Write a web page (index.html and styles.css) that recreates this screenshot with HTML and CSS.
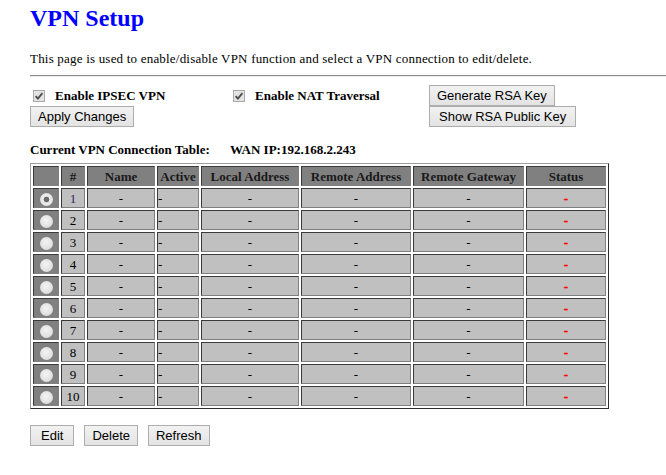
FILE: index.html
```html
<!DOCTYPE html>
<html lang="en">
<head>
  <meta charset="UTF-8" />
  <title>VPN Setup</title>
  <link rel="stylesheet" href="styles.css">
</head>
<body>

<h2 class="page-title">VPN Setup</h2>
<p class="intro">This page is used to enable/disable VPN function and select a VPN connection to edit/delete.</p>
<hr class="divider">

<div class="options">
  <label class="check">
    <svg class="check-box" width="12" height="12" viewBox="0 0 12 12">
      <rect x="0.5" y="0.5" width="11" height="11" fill="#e3e3e3" stroke="#a8a8a8"/>
      <path d="M2.6 6.2 L4.9 8.6 L9.4 3.2" fill="none" stroke="#4a4a4a" stroke-width="1.8"/>
    </svg>
    Enable IPSEC VPN
  </label>
  <label class="check">
    <svg class="check-box" width="12" height="12" viewBox="0 0 12 12">
      <rect x="0.5" y="0.5" width="11" height="11" fill="#e3e3e3" stroke="#a8a8a8"/>
      <path d="M2.6 6.2 L4.9 8.6 L9.4 3.2" fill="none" stroke="#4a4a4a" stroke-width="1.8"/>
    </svg>
    Enable NAT Traversal
  </label>
  <div><button class="btn">Generate RSA Key</button></div>
  <div><button class="btn">Apply Changes</button></div>
  <div></div>
  <div><button class="btn btn-wide">Show RSA Public Key</button></div>
</div>

<div class="table-caption">
  <span>Current VPN Connection Table:</span>
  <span>WAN IP:192.168.2.243</span>
</div>

<table class="vpn-table">
  <thead>
    <tr>
      <th class="col-sel"></th>
      <th class="col-num">#</th>
      <th class="col-name">Name</th>
      <th class="col-active">Active</th>
      <th class="col-local">Local Address</th>
      <th class="col-remote">Remote Address</th>
      <th class="col-gateway">Remote Gateway</th>
      <th class="col-status">Status</th>
    </tr>
  </thead>
  <tbody id="vpn-body"></tbody>
</table>

<div class="actions">
  <button class="btn btn-edit">Edit</button>
  <button class="btn">Delete</button>
  <button class="btn">Refresh</button>
</div>

<script>
const tbody = document.getElementById('vpn-body');
for (let i = 1; i <= 10; i++) {
  const row = document.createElement('tr');
  row.innerHTML = `
    <td class="sel"><input type="radio" name="select" ${i === 1 ? 'checked' : ''}></td>
    <td class="num${i === 1 ? ' current' : ''}">${i}</td>
    <td>-</td>
    <td class="left">-</td>
    <td>-</td>
    <td>-</td>
    <td>-</td>
    <td class="status">-</td>
  `;
  tbody.appendChild(row);
}
</script>

</body>
</html>
```

FILE: styles.css
```css
body { margin: 0; padding-left: 30px; font-family: "Liberation Serif", "Times New Roman", serif; font-size: 13px; color: #000; background: #fff; }
.page-title { margin: 5px 0 0; font-size: 24px; font-weight: bold; color: #0000ff; line-height: 27px; }
.intro { margin: 19px 0 0; line-height: 15px; letter-spacing: 0.2px; }
.divider { margin: 9px 0 0; border: none; border-top: 1px solid #8c8c8c; border-bottom: 1px solid #ececec; height: 0; }

.options { display: grid; grid-template-columns: 200px 199px auto; grid-auto-rows: 21px; margin-top: 8px; align-items: center; }
.check { display: flex; align-items: center; font-weight: bold; }
.check-box { margin: 0 10px 0 3px; }

.btn { font-family: "Liberation Sans", Arial, sans-serif; font-size: 13px; line-height: 15px; color: #000; padding: 2px 7px; border: 1px solid #adadad; border-radius: 0; background: linear-gradient(#f2f2f2, #e3e3e3); height: 21px; }
.btn-edit { padding: 2px 10px; }
.btn-wide { padding: 2px 9px; }

.table-caption { display: grid; grid-template-columns: 200px auto; margin-top: 15px; font-weight: bold; line-height: 15px; }

.vpn-table { margin-top: 6px; width: 579px; table-layout: fixed; border-collapse: separate; border-spacing: 2px; border: 1px solid; border-color: #a0a0a0 #2e2e2e #2e2e2e #a0a0a0; }
.vpn-table th, .vpn-table td { height: 18px; padding: 0; border: 1px solid; border-color: #3a3a3a #808080 #808080 #3a3a3a; text-align: center; line-height: 15px; white-space: nowrap; }
.vpn-table th { background: #808080; color: #1a1a1a; font-weight: bold; }
.vpn-table td { background: #c0c0c0; }
.vpn-table td.sel { background: #808080; }
.vpn-table td.left { text-align: left; }
.vpn-table td.status { color: #ff0000; font-weight: bold; -webkit-text-stroke: 0.4px #ff0000; }
.vpn-table td.current { color: #3b1d6b; }

.col-sel { width: 24px; }
.col-num { width: 22px; }
.col-name { width: 66px; }
.col-active { width: 40px; }
.col-local { width: 96px; }
.col-remote { width: 108px; }
.col-gateway { width: 109px; }
.col-status { width: 78px; }

.sel input { appearance: none; width: 13px; height: 13px; margin: 2px 0 0; border-radius: 50%; vertical-align: top; background: radial-gradient(circle at 45% 40%, #f4f4f4, #d4d4d4); }
.sel input:checked { background: radial-gradient(circle, #6a6a6a 0 2.5px, #ededed 3.2px, #dadada); }

.actions { display: flex; gap: 10px; margin-top: 16px; }
```
